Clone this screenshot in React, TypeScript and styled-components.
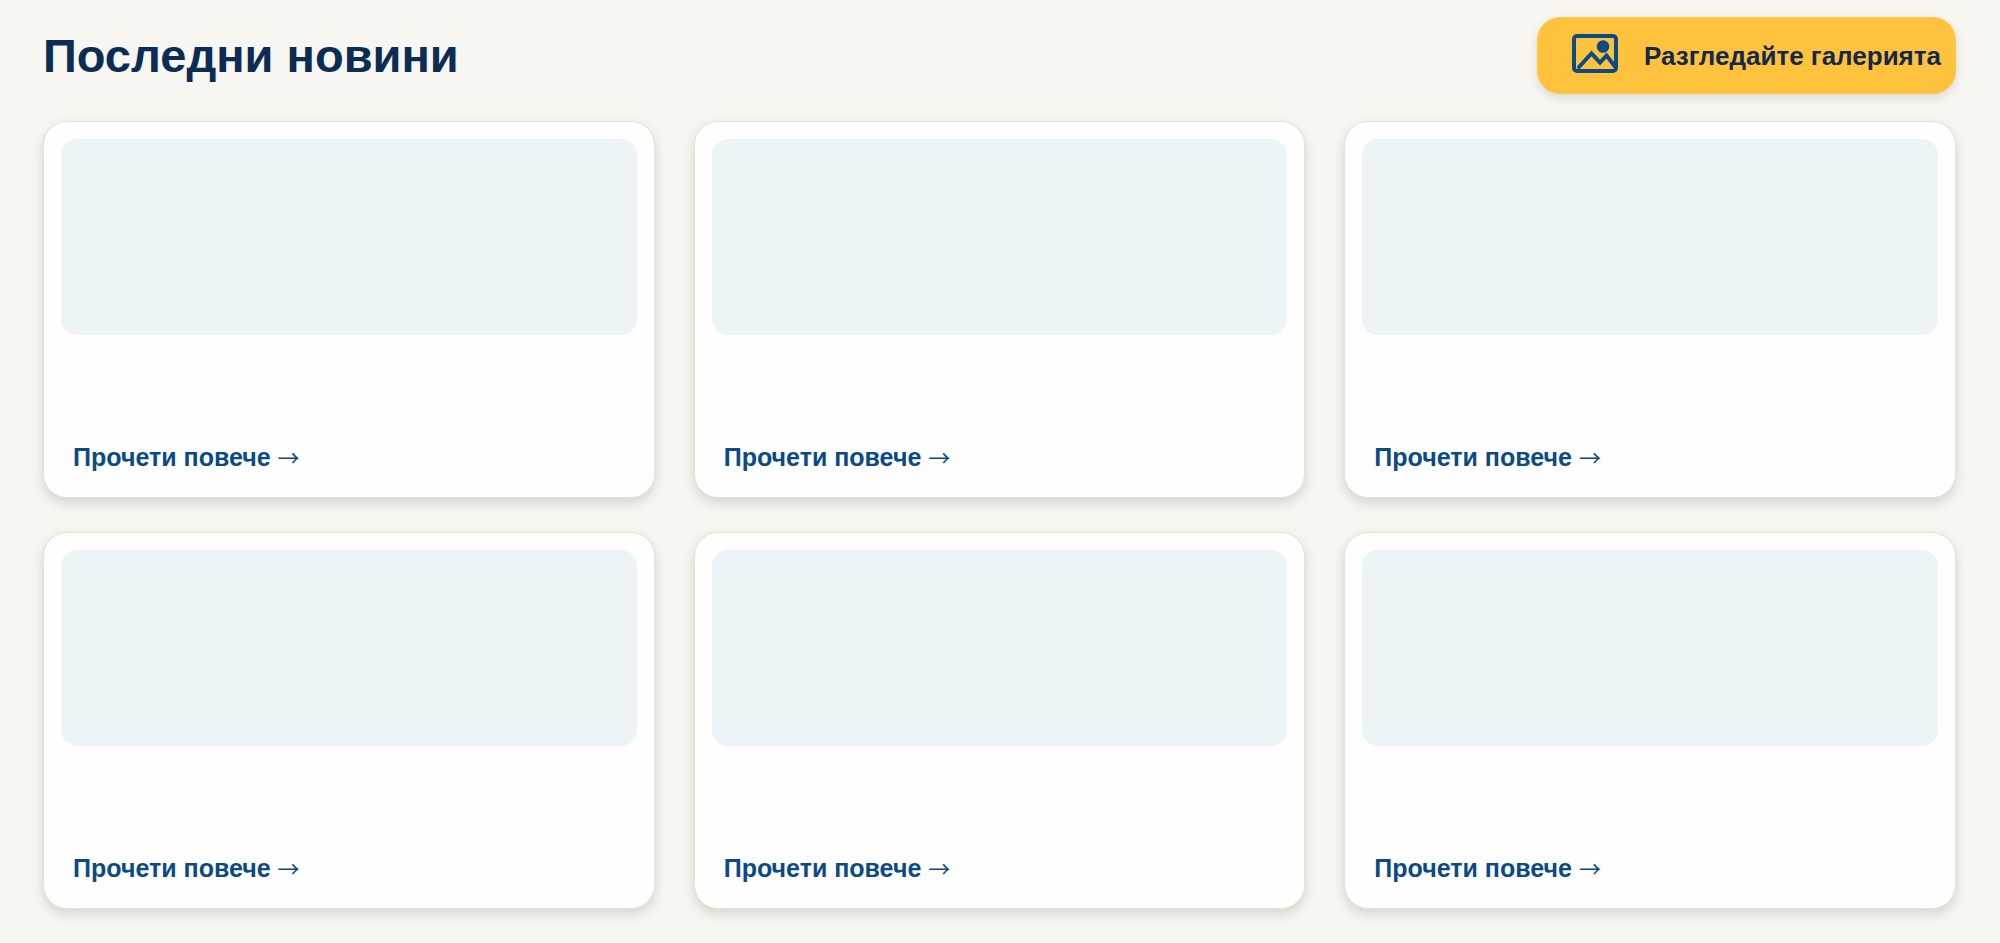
import React from "react";
import styled, { createGlobalStyle } from "styled-components";

const GlobalStyle = createGlobalStyle`
  *, *::before, *::after { box-sizing: border-box; }
  body {
    margin: 0;
    background: #f7f6f1;
    font-family: "Liberation Sans", Arial, sans-serif;
    color: #0a2c55;
  }
`;

const Section = styled.section`
  padding: 17px 44px 35px 43px;
`;

const Header = styled.header`
  display: flex;
  align-items: center;
  justify-content: space-between;
  margin-bottom: 27px;
`;

const Title = styled.h2`
  margin: 0;
  font-size: 47px;
  line-height: 60px;
  font-weight: 700;
`;

const GalleryButton = styled.button`
  display: flex;
  align-items: center;
  gap: 24px;
  height: 77px;
  padding: 0 14px 0 34px;
  border: 1px solid #fdc84f;
  border-radius: 23px;
  background: #ffc23c;
  box-shadow: 0 4px 10px rgba(40, 40, 30, 0.14);
  color: #13294b;
  font-family: inherit;
  font-size: 26px;
  line-height: 32px;
  font-weight: 700;
  white-space: nowrap;
  cursor: pointer;
`;

const GalleryIcon = styled.svg`
  flex: none;
  width: 48px;
  height: 44px;
  color: #0b4a85;
`;

const Grid = styled.div`
  display: grid;
  grid-template-columns: repeat(3, minmax(0, 1fr));
  gap: 34px 39px;
`;

const Card = styled.article`
  display: flex;
  flex-direction: column;
  padding: 17px 17px 24px;
  border: 1px solid #e4e2dc;
  border-radius: 24px;
  background: #fefefe;
  box-shadow: 0 5px 12px rgba(40, 40, 30, 0.16);
`;

const Cover = styled.div`
  height: 196px;
  border-radius: 16px;
  background: #ecf4f8;
`;

const Summary = styled.div`
  height: 106px;
`;

const ReadMore = styled.a`
  align-self: flex-start;
  height: 32px;
  margin-left: 12px;
  color: #0b4a85;
  font-size: 25px;
  line-height: 32px;
  font-weight: 700;
  text-decoration: none;
`;

const Arrow = styled.span`
  font-family: "Noto Sans CJK SC", sans-serif;
  font-size: 22px;
  line-height: 1;
  font-weight: 400;
`;

const articles = [1, 2, 3, 4, 5, 6];

export default function App() {
  return (
    <>
      <GlobalStyle />
      <Section>
        <Header>
          <Title>Последни новини</Title>
          <GalleryButton type="button">
            <GalleryIcon viewBox="0 0 48 44" fill="none" stroke="currentColor" aria-hidden="true">
              <rect x="2" y="2" width="42" height="35" rx="3" strokeWidth="4" />
              <circle cx="31" cy="12.5" r="6.3" fill="currentColor" stroke="none" />
              <path d="M7 33 19.500 19.500 28 28.500 34.500 21.500 43 32.500" strokeWidth="4" strokeLinecap="round" />
            </GalleryIcon>
            Разгледайте галерията
          </GalleryButton>
        </Header>
        <Grid>
          {articles.map((id) => (
            <Card key={id}>
              <Cover />
              <Summary />
              <ReadMore href="#">
                Прочети повече <Arrow>→</Arrow>
              </ReadMore>
            </Card>
          ))}
        </Grid>
      </Section>
    </>
  );
}
